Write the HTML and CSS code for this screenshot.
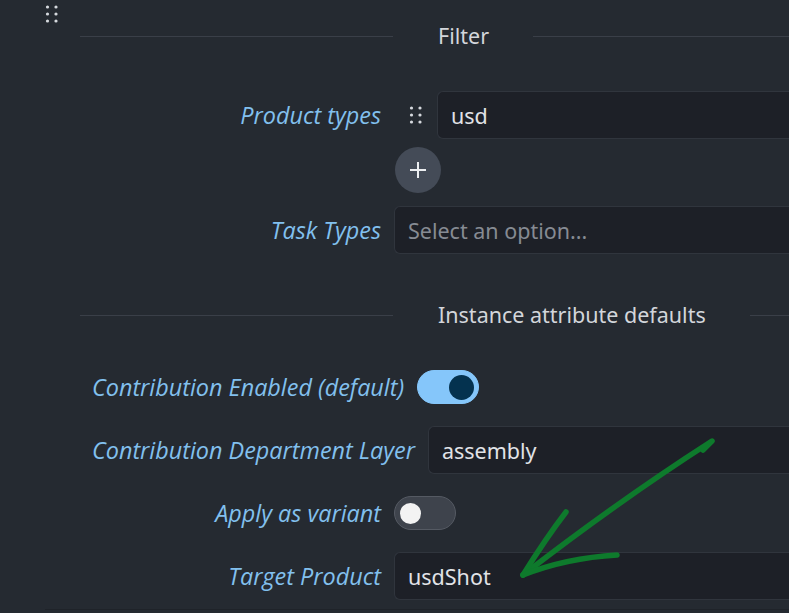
FILE: index.html
```html
<!DOCTYPE html>
<html lang="en">
<head>
    <meta charset="UTF-8">
    <title>Publish plugin settings</title>
    <link rel="stylesheet" href="styles.css">
</head>
<body>
    <div class="panel">
        <div class="panel-head">
            <svg class="grip" width="14" height="18" viewBox="0 0 14 18">
                <circle cx="2.5" cy="2" r="1.6"/><circle cx="11" cy="2" r="1.6"/>
                <circle cx="2.5" cy="9" r="1.6"/><circle cx="11" cy="9" r="1.6"/>
                <circle cx="2.5" cy="16" r="1.6"/><circle cx="11" cy="16" r="1.6"/>
            </svg>
        </div>

        <div class="divider">
            <span class="rule lead"></span>
            <span class="divider-title">Filter</span>
            <span class="rule"></span>
        </div>

        <div class="row first">
            <label class="label">Product types</label>
            <div class="field">
                <span class="item-grip">
                    <svg class="grip" width="14" height="18" viewBox="0 0 14 18">
                        <circle cx="2.5" cy="2" r="1.6"/><circle cx="11" cy="2" r="1.6"/>
                        <circle cx="2.5" cy="9" r="1.6"/><circle cx="11" cy="9" r="1.6"/>
                        <circle cx="2.5" cy="16" r="1.6"/><circle cx="11" cy="16" r="1.6"/>
                    </svg>
                </span>
                <div class="input">usd</div>
            </div>
        </div>

        <div class="row add-row">
            <span class="label"></span>
            <button class="add">
                <svg width="18" height="18" viewBox="0 0 18 18"><path d="M9 1v16M1 9h16"/></svg>
            </button>
        </div>

        <div class="row task-row">
            <label class="label">Task Types</label>
            <div class="input placeholder">Select an option...</div>
        </div>

        <div class="divider second">
            <span class="rule lead"></span>
            <span class="divider-title">Instance attribute defaults</span>
            <span class="rule"></span>
        </div>

        <div class="attr-rows">
            <div class="row">
                <label class="label">Contribution Enabled (default)</label>
                <span class="toggle on"><span class="knob"></span></span>
            </div>
            <div class="row">
                <label class="label">Contribution Department Layer</label>
                <div class="input">assembly</div>
            </div>
            <div class="row">
                <label class="label">Apply as variant</label>
                <span class="toggle"><span class="knob"></span></span>
            </div>
            <div class="row">
                <label class="label">Target Product</label>
                <div class="input">usdShot</div>
            </div>
        </div>

        <div class="panel-end"></div>
    </div>

    <!-- hand drawn annotation -->
    <svg class="annotation" width="789" height="613" viewBox="0 0 789 613">
        <path d="M703 450 L712 441 Q620 500 523 575"/>
        <path d="M566 512 Q546 538 523 575"/>
        <path d="M523 575 Q566 558 617 555"/>
    </svg>
</body>
</html>
```

FILE: styles.css
```css
body {
    margin: 0;
    background: #252a31;
    font-family: "Noto Sans", "Open Sans", sans-serif;
    overflow: hidden;
}

.panel {
    width: 789px;
    height: 613px;
}

.panel-head {
    height: 26px;
    padding-left: 45px;
    box-sizing: border-box;
    padding-top: 5px;
}

.grip {
    display: block;
    fill: #d6d9de;
}

.divider {
    display: flex;
    align-items: center;
    height: 20px;
    padding-left: 80px;
}

.divider.second {
    margin-top: 51px;
}

.rule {
    flex: 1;
    height: 1px;
    background: #3a3f48;
}

.rule.lead {
    flex: none;
    width: 313px;
}

.divider-title {
    padding: 0 44px 0 45px;
    font-size: 21.5px;
    line-height: 18px;
    color: #d3d6db;
    white-space: nowrap;
}

.row {
    display: flex;
    align-items: center;
    gap: 13px;
    height: 48px;
    padding-left: 92px;
}

.row.first {
    margin-top: 45px;
}

.row.add-row {
    height: 46px;
    margin-top: 8px;
}

.row.task-row {
    margin-top: 13px;
}

.label {
    flex: none;
    min-width: 289px;
    text-align: right;
    font-family: "Open Sans", sans-serif;
    font-style: italic;
    font-weight: 500;
    font-size: 23.4px;
    color: #82c0ee;
    white-space: nowrap;
}

.field {
    flex: 1;
    display: flex;
    align-items: center;
    height: 100%;
}

.item-grip {
    width: 43px;
    padding-left: 15px;
    box-sizing: border-box;
}

.input {
    flex: 1;
    height: 48px;
    box-sizing: border-box;
    display: flex;
    align-items: center;
    padding-left: 13px;
    background: #1d2027;
    border: 1px solid #30353d;
    border-right: none;
    border-radius: 6px 0 0 6px;
    font-size: 21.5px;
    color: #e1e3e7;
}

.input.placeholder {
    color: #868b93;
}

.add {
    width: 46px;
    height: 46px;
    margin-left: 1px;
    padding: 0;
    border: none;
    border-radius: 50%;
    background: #444b57;
    display: flex;
    align-items: center;
    justify-content: center;
}

.add svg {
    stroke: #eceef1;
    stroke-width: 2;
}

.attr-rows {
    margin-top: 38px;
    display: flex;
    flex-direction: column;
    gap: 15px;
}

.toggle {
    width: 62px;
    height: 34px;
    box-sizing: border-box;
    border-radius: 17px;
    background: #3e434c;
    border: 1px solid #555a63;
    display: flex;
    align-items: center;
    padding: 0 5px;
}

.toggle .knob {
    width: 21px;
    height: 21px;
    border-radius: 50%;
    background: #f3f3f3;
}

.toggle.on {
    background: #85c6fa;
    border-color: #85c6fa;
    justify-content: flex-end;
    padding: 0 4px;
}

.toggle.on .knob {
    width: 25px;
    height: 25px;
    background: #04324f;
}

.panel-end {
    margin: 9px 0 0 45px;
    height: 1px;
    background: #1f2329;
}

.annotation {
    position: absolute;
    left: 0;
    top: 0;
    fill: none;
    stroke: #0e7a2c;
    stroke-width: 5.5;
    stroke-linecap: round;
    stroke-linejoin: round;
}
```
